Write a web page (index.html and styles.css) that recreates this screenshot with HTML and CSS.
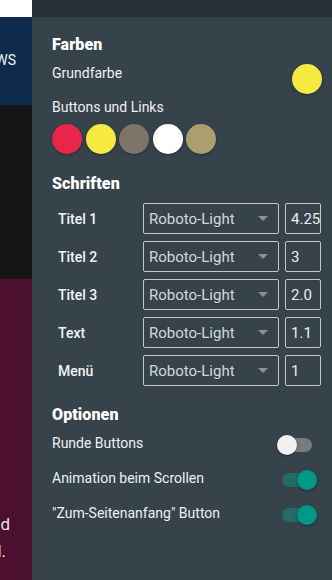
FILE: index.html
```html
<!DOCTYPE html>
<html lang="de">
<head>
<meta charset="utf-8">
<link rel="stylesheet" href="styles.css">
</head>
<body>
<div class="page">
  <div class="strip">
    <div class="s-white"></div>
    <div class="s-blue"><div class="clip clip-news"><span>NEWS</span></div></div>
    <div class="s-black"></div>
    <div class="s-maroon">
      <div class="clip clip-l1"><span>Hallo world</span></div>
      <div class="clip clip-l2"><span>Willkommen im Portal.</span></div>
    </div>
  </div>
  <div class="panel">
    <div class="topbar"></div>
    <div class="content">
      <h2 class="heading">Farben</h2>
      <div class="row-color">
        <span class="label">Grundfarbe</span>
        <span class="dot dot-yellow"></span>
      </div>
      <div class="label label-links">Buttons und Links</div>
      <div class="swatches">
        <span class="dot dot-red"></span>
        <span class="dot dot-yellow"></span>
        <span class="dot dot-taupe"></span>
        <span class="dot dot-white"></span>
        <span class="dot dot-tan"></span>
      </div>

      <h2 class="heading heading-fonts">Schriften</h2>
      <div class="fonts">
        <div class="font-row">
          <span class="font-label">Titel 1</span>
          <div class="select"><span>Roboto-Light</span><i class="caret"></i></div>
          <div class="num"><span>4.25</span></div>
        </div>
        <div class="font-row">
          <span class="font-label">Titel 2</span>
          <div class="select"><span>Roboto-Light</span><i class="caret"></i></div>
          <div class="num"><span>3</span></div>
        </div>
        <div class="font-row">
          <span class="font-label">Titel 3</span>
          <div class="select"><span>Roboto-Light</span><i class="caret"></i></div>
          <div class="num"><span>2.0</span></div>
        </div>
        <div class="font-row">
          <span class="font-label">Text</span>
          <div class="select"><span>Roboto-Light</span><i class="caret"></i></div>
          <div class="num"><span>1.1</span></div>
        </div>
        <div class="font-row">
          <span class="font-label">Menü</span>
          <div class="select"><span>Roboto-Light</span><i class="caret"></i></div>
          <div class="num"><span>1</span></div>
        </div>
      </div>

      <h2 class="heading heading-opts">Optionen</h2>
      <div class="opts">
        <div class="opt-row">
          <span class="label">Runde Buttons</span>
          <span class="switch"><span class="track"></span><span class="thumb"></span></span>
        </div>
        <div class="opt-row">
          <span class="label">Animation beim Scrollen</span>
          <span class="switch on"><span class="track"></span><span class="thumb"></span></span>
        </div>
        <div class="opt-row">
          <span class="label">"Zum-Seitenanfang" Button</span>
          <span class="switch on"><span class="track"></span><span class="thumb"></span></span>
        </div>
      </div>
    </div>
  </div>
</div>
</body>
</html>
```
FILE: styles.css
```css
* { box-sizing: border-box; }
html, body { margin: 0; padding: 0; }
body {
  width: 332px;
  height: 580px;
  overflow: hidden;
  font-family: Roboto, "Noto Sans", sans-serif;
  background: #36434b;
}
.page { display: flex; height: 580px; }

.strip { width: 32px; flex: none; display: flex; flex-direction: column; }
.s-white { height: 17px; background: #ffffff; }
.s-blue { height: 88px; background: #0e2b4e; padding-top: 33px; }
.s-black { height: 174px; background: #141416; }
.s-maroon { flex: 1; background: #4d0f2f; padding-top: 232px; }
.clip {
  display: flex;
  justify-content: flex-end;
  overflow: hidden;
  white-space: nowrap;
  color: #e6e3e6;
}
.clip-news { padding-right: 16px; font-size: 14px; line-height: 20px; color: #f2f2f2; }
.clip-l1 { padding-right: 22px; font-size: 17px; line-height: 27px; }
.clip-l2 { padding-right: 26px; font-size: 17px; line-height: 27px; }

.panel { flex: 1; display: flex; flex-direction: column; }
.topbar { height: 17px; background: #272e36; }
.content { padding: 18px 10px 0 20px; color: #f0f1f2; }

.heading {
  margin: 0;
  font-size: 16px;
  line-height: 20px;
  font-weight: 900;
  color: #ffffff;
  letter-spacing: 0.1px;
}
.label { font-size: 14px; line-height: 18px; color: #eef0f1; }

.row-color {
  margin-top: 9px;
  display: flex;
  justify-content: space-between;
  align-items: flex-start;
}
.label-links { margin-top: 4px; }
.swatches { margin-top: 8px; display: flex; gap: 3.5px; }

.dot {
  width: 30px;
  height: 30px;
  border-radius: 50%;
  flex: none;
  box-shadow: 0 1px 3px rgba(0, 0, 0, 0.3);
}
.dot-yellow { background: #f5e942; }
.dot-red { background: #e8264a; }
.dot-taupe { background: #7e7469; }
.dot-white { background: #ffffff; }
.dot-tan { background: #ab9f70; }

.heading-fonts { margin-top: 20px; }
.fonts { margin-top: 9px; display: flex; flex-direction: column; gap: 7px; }
.font-row { display: flex; align-items: center; height: 31px; }
.font-label {
  width: 91px;
  padding-left: 6px;
  font-size: 14px;
  font-weight: 500;
  color: #f3f4f5;
}
.select {
  width: 136px;
  height: 31px;
  border: 1px solid #c3c7ca;
  border-radius: 2px;
  display: flex;
  align-items: center;
  justify-content: space-between;
  padding: 0 10px 0 5px;
  font-size: 15px;
  color: #d4d7d9;
}
.caret {
  width: 0;
  height: 0;
  border-left: 5px solid transparent;
  border-right: 5px solid transparent;
  border-top: 5px solid #8b9296;
}
.num {
  margin-left: 6px;
  width: 36px;
  height: 31px;
  border: 1px solid #c3c7ca;
  border-radius: 2px;
  display: flex;
  align-items: center;
  padding-left: 5px;
  overflow: hidden;
  white-space: nowrap;
  font-size: 15px;
  color: #eceeef;
}

.heading-opts { margin-top: 19px; }
.opts { margin-top: 10px; display: flex; flex-direction: column; gap: 15px; }
.opt-row {
  display: flex;
  justify-content: space-between;
  align-items: center;
  height: 20px;
}
.opt-row .label { position: relative; top: -2px; }
.switch {
  position: relative;
  width: 40px;
  height: 20px;
  margin-right: 5px;
  flex: none;
}
.track {
  position: absolute;
  left: 5px;
  top: 3px;
  width: 30px;
  height: 14px;
  border-radius: 7px;
  background: #757c82;
}
.thumb {
  position: absolute;
  left: 0;
  top: 0;
  width: 20px;
  height: 20px;
  border-radius: 50%;
  background: #f1f1f1;
  box-shadow: 0 1px 3px rgba(0, 0, 0, 0.4);
}
.switch.on .track { background: #226b66; }
.switch.on .thumb { left: 20px; background: #009688; }
```
